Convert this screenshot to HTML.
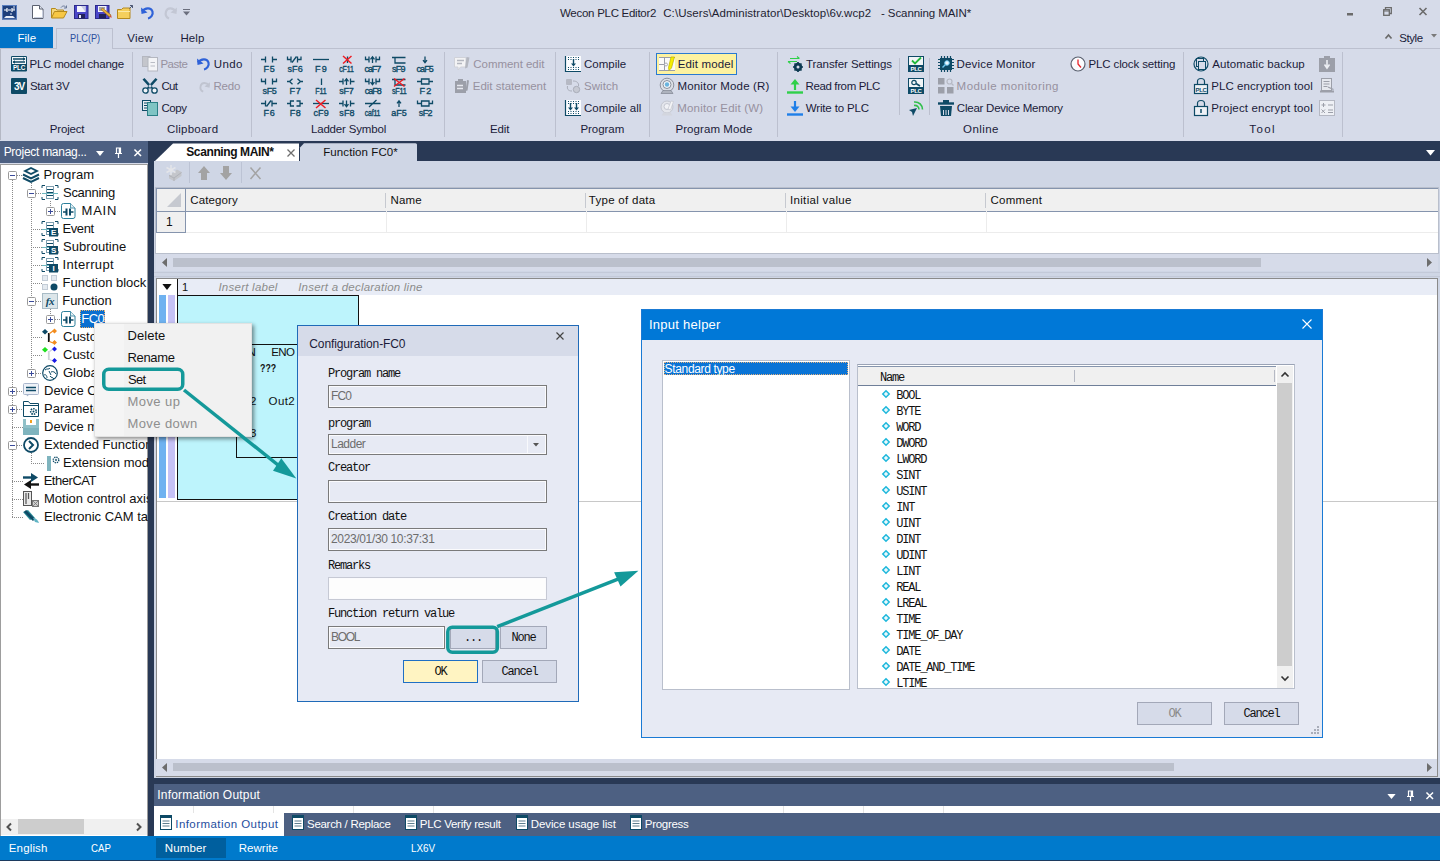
<!DOCTYPE html>
<html><head><meta charset="utf-8"><title>Wecon PLC Editor2</title>
<style>
*{box-sizing:border-box;margin:0;padding:0}
html,body{width:1440px;height:861px;overflow:hidden}
body{position:relative;background:#d6dbe9;font-family:"Liberation Sans",sans-serif;font-size:11.5px;letter-spacing:-0.25px;color:#1b1b3a}
.a{position:absolute}
svg{position:absolute;overflow:visible}
.t{position:absolute;white-space:nowrap;line-height:16px;height:16px}
.g{color:#96919f}
.sep{position:absolute;width:1px;background:#bcc0cf;top:52px;height:85px}
.gl{position:absolute;top:121px;height:16px;line-height:16px;text-align:center;white-space:nowrap;transform:translateX(-50%)}
.mono{font-family:"Liberation Mono",monospace;font-size:12px;letter-spacing:-1.2px;color:#111}
.inp{position:absolute;border:1px solid #7a7a7a;height:23px;background:#e7eaf4;color:#6d6d6d;font-size:12px;line-height:20px;padding-left:3px;outline:1px solid #fff}
.btn{position:absolute;border:1px solid #a9aebb;background:#d6dbe9;height:23px;text-align:center;line-height:21px}
.tr{position:absolute;white-space:nowrap;font-size:13px;letter-spacing:0;line-height:18px;height:18px;color:#111}
</style></head><body>
<!-- title bar -->
<svg style="left:2px;top:5px" width="16" height="15" viewBox="0 0 16 15"><rect width="15" height="14.5" fill="#1f3f7a"/><rect x="0.5" y="0.5" width="14" height="13.5" fill="none" stroke="#5a7fc0" stroke-width="1"/><path d="M2 5h3M10 5h3M5 3v4M10 3v4M6 5h3" stroke="#fff" stroke-width="1.2" fill="none"/><path d="M12 1v4M9 8v2" stroke="#dfe6f5" stroke-width="1"/><path d="M2 13l2-2h7l2 2z" fill="#e8edf8"/></svg>
<svg style="left:32px;top:5px" width="12" height="14" viewBox="0 0 12 14"><path d="M.5.5h7l3.5 3.5v9.500h-10.500z" fill="#fff" stroke="#5b6170"/><path d="M7.500.5v3.500h3.500" fill="#dfe3ee" stroke="#5b6170"/><path d="M2 12.500h8.500v-7" fill="none" stroke="#c9cfdf"/></svg>
<svg style="left:51px;top:5px" width="17" height="14" viewBox="0 0 17 14"><path d="M.5 13V3.500h4l1.500 1.500h6.500V7" fill="#f5d77a" stroke="#b58a1e"/><path d="M.5 13l3-6.500h12.500l-3.500 6.500z" fill="#f7c744" stroke="#b58a1e"/><path d="M10 2.500c1.500-2 4-2 5 0" fill="none" stroke="#6b7a99"/><path d="M15.500.5v2.500h-2.500" fill="none" stroke="#6b7a99"/></svg>
<svg style="left:74px;top:5px" width="15" height="14" viewBox="0 0 15 14"><rect x=".5" y=".5" width="13.500" height="13" fill="#4a46c8" stroke="#2b2a8a"/><rect x="3" y="1" width="8.500" height="6" fill="#f4f5fb"/><path d="M7 1l4.500 0v6z" fill="#c7cbe6"/><rect x="4" y="9" width="7" height="4.500" fill="#22225a"/><rect x="5" y="10" width="2" height="3" fill="#e6e8f5"/></svg>
<svg style="left:95px;top:5px" width="17" height="14" viewBox="0 0 17 14"><rect x=".5" y=".5" width="13.500" height="13" fill="#4a46c8" stroke="#2b2a8a"/><rect x="3" y="1" width="8.500" height="6" fill="#f4f5fb"/><path d="M4 3h6M4 5h4" stroke="#555"/><rect x="4" y="9" width="7" height="4.500" fill="#22225a"/><path d="M6 4.500l8.500 7.500 1.500-2-8.500-7z" fill="#e9b13a" stroke="#8a5a12" stroke-width=".6"/><path d="M14.500 12l1.500-2 .8 2.800z" fill="#d24a3a"/></svg>
<svg style="left:117px;top:5px" width="17" height="14" viewBox="0 0 17 14"><path d="M.5 13.500V4.500h4l1.500-1.500h7V13.500z" fill="#f5cf5c" stroke="#b58a1e"/><path d="M1 6.500h12" stroke="#fbe9a6"/><path d="M12.500 3.500l3-3M13 .5h2.500v2.500" fill="none" stroke="#4d5874"/></svg>
<svg style="left:141px;top:6px" width="13" height="13" viewBox="0 0 13 13"><path d="M1 5.500C4 1.500 10 1 11.500 5.500 12.500 9 9.500 12 7 12.500" fill="none" stroke="#2f62d8" stroke-width="2.200"/><path d="M0 1.500l.5 6.500 6-1.500z" fill="#2f62d8"/></svg>
<svg style="left:164px;top:6px" width="13" height="13" viewBox="0 0 13 13"><path d="M12 5.500C9 1.500 3.500 1 2 5.500 1 9 2.500 11.500 5 12.500" fill="none" stroke="#c3c7d4" stroke-width="2.200"/><path d="M13 1.500l-.5 6.500-6-1.500z" fill="#c3c7d4"/></svg>
<svg style="left:183px;top:9px" width="7" height="7" viewBox="0 0 7 7"><path d="M0 .5h7" stroke="#6a6e7d"/><path d="M0 2.500h7l-3.500 4z" fill="#6a6e7d"/></svg>
<div class="t" style="left:560px;top:5px;color:#1e1e32;letter-spacing:-0.274px;left:560.0px" id="ttl1">Wecon PLC Editor2</div>
<div class="t" style="left:663px;top:5px;color:#1e1e32;letter-spacing:0.063px;left:663.25px" id="ttl2">C:\Users\Administrator\Desktop\6v.wcp2</div>
<div class="t" style="left:881px;top:5px;color:#1e1e32;letter-spacing:-0.084px;left:881.0px" id="ttl3">- Scanning MAIN*</div>
<svg style="left:1347px;top:12.500px" width="6" height="3"><rect width="6" height="2.500" fill="#6b6b6b"/></svg>
<svg style="left:1383px;top:7px" width="9" height="9" viewBox="0 0 9 9"><path d="M2.500 2.500V.7h5.800v5.800h-2" fill="none" stroke="#6b6b6b" stroke-width="1.300"/><rect x=".7" y="2.700" width="5.600" height="5.600" fill="none" stroke="#6b6b6b" stroke-width="1.300"/><path d="M.5 4h6" stroke="#6b6b6b" stroke-width="1"/></svg>
<svg style="left:1418.500px;top:8px" width="8" height="7" viewBox="0 0 8 7"><path d="M.5 0l7 7M7.500 0l-7 7" stroke="#6b6b6b" stroke-width="1.600"/></svg>
<!-- ribbon tabs -->
<div class="a" style="left:0;top:27px;width:53px;height:21px;background:#0173c7"></div>
<div class="t" style="left:16px;top:30px;color:#fff;letter-spacing:0.038px;left:17.45px" id="tfile">File</div>
<div class="a" style="left:0;top:48px;width:1440px;height:1px;background:#bcc0cf"></div>
<div class="a" style="left:56px;top:28px;width:57px;height:21px;background:#d6dbe9;border:1px solid #bcc0cf;border-bottom:none"></div>
<div class="t" style="left:70px;top:30px;color:#2b4f9e;transform:scaleX(.8);transform-origin:0 0;letter-spacing:0px;left:69.5px" id="tplc">PLC(P)</div>
<div class="t" style="left:128px;top:30px;letter-spacing:0.279px;left:127.25px" id="tview">View</div>
<div class="t" style="left:181px;top:30px;letter-spacing:0.098px;left:180.45px" id="thelp">Help</div>
<svg style="left:1385px;top:34px" width="7" height="5" viewBox="0 0 7 5"><path d="M.5 4.500l3-3.500 3 3.500" fill="none" stroke="#6b6b6b" stroke-width="1.700"/></svg>
<div class="t" style="left:1399px;top:30px;letter-spacing:-0.418px;left:1399.15px" id="tstyle">Style</div>
<svg style="left:1431px;top:34px" width="6" height="4" viewBox="0 0 6 4"><path d="M0 0h6l-3 3.500z" fill="#7a7a7a"/></svg>
<div class="a" style="left:0;top:49px;width:1px;height:91px;background:#b4b8c4"></div>
<!-- group separators -->
<div class="sep" style="left:132px"></div><div class="sep" style="left:251px"></div><div class="sep" style="left:444px"></div><div class="sep" style="left:555px"></div><div class="sep" style="left:649px"></div><div class="sep" style="left:777px"></div><div class="sep" style="left:1183px"></div><div class="sep" style="left:1342px"></div>
<div class="sep" style="left:899px;top:58px;height:57px"></div><div class="sep" style="left:929px;top:58px;height:57px"></div>
<!-- group labels -->
<div class="gl" style="left:67px;letter-spacing:-0.182px;left:67.11px" id="gl1">Project</div>
<div class="gl" style="left:192px;letter-spacing:0.241px;left:192.64px" id="gl2">Clipboard</div>
<div class="gl" style="left:348px;letter-spacing:-0.171px;left:348.52px" id="gl3">Ladder Symbol</div>
<div class="gl" style="left:500px;letter-spacing:-0.124px;left:499.66px" id="gl4">Edit</div>
<div class="gl" style="left:602px;letter-spacing:-0.044px;left:602.34px" id="gl5">Program</div>
<div class="gl" style="left:713px;letter-spacing:0.076px;left:713.96px" id="gl6">Program Mode</div>
<div class="gl" style="left:980px;letter-spacing:0.421px;left:980.96px" id="gl7">Online</div>
<div class="gl" style="left:1263px;letter-spacing:1.386px;left:1262.64px" id="gl8">Tool</div>
<!-- Project -->
<svg style="left:11px;top:56px" width="16" height="16" viewBox="0 0 16 16"><rect width="16" height="15.500" rx="1.200" fill="#0e4a66"/><rect x="1" y="1" width="14" height="7" fill="#f4f7fa"/><path d="M2 3h12M2 6h12" stroke="#0e4a66" stroke-width="1.300"/><path d="M12 1.300l2.500 1.700-2.500 1.700zM4 4.300l-2.500 1.700 2.500 1.700z" fill="#0e4a66"/><text x="8" y="14.300" font-size="6.500" font-weight="bold" fill="#fff" text-anchor="middle" font-family="Liberation Sans,sans-serif" textLength="12" lengthAdjust="spacingAndGlyphs">PLC</text></svg>
<div class="t" style="left:30px;top:56px;letter-spacing:-0.205px;left:29.45px" id="r1">PLC model change</div>
<svg style="left:11px;top:78px" width="16" height="16" viewBox="0 0 16 16"><rect width="16" height="16" rx="1" fill="#0e4a66"/><text x="8" y="12" font-size="10" font-weight="bold" fill="#fff" text-anchor="middle" font-family="Liberation Sans,sans-serif" letter-spacing="-1">3V</text></svg>
<div class="t" style="left:30px;top:78px;letter-spacing:-0.261px;left:29.95px" id="r2">Start 3V</div>
<!-- Clipboard -->
<svg style="left:142px;top:56px" width="16" height="16" viewBox="0 0 16 16"><rect x=".5" y=".5" width="7.500" height="10" fill="#c4c6cc" stroke="#b4b7c0"/><rect x="6" y="1.500" width="9.500" height="13.500" fill="#f3f4f7" stroke="#b4b7c0"/><path d="M8.500 6.500h4.500M8.500 10h4.500" stroke="#b9bcc5" stroke-width="1.200"/></svg>
<div class="t g" style="left:161px;top:56px;letter-spacing:-0.492px;left:160.45px" id="r3">Paste</div>
<svg style="left:197px;top:57px" width="13" height="13" viewBox="0 0 13 13"><path d="M1 5.500C4 1.500 10 1 11.500 5.500 12.500 9 9.500 12 7 12.500" fill="none" stroke="#2f62d8" stroke-width="2.200"/><path d="M0 1.500l.5 6.500 6-1.500z" fill="#2f62d8"/></svg>
<div class="t" style="left:214px;top:56px;letter-spacing:0.385px;left:213.75px" id="r4">Undo</div>
<svg style="left:142px;top:78px" width="16" height="16" viewBox="0 0 16 16"><path d="M.5 1.500L2.500 0l8.500 9.500-2 1.500zM15.500 1.500L13.500 0 5 9.500l2 1.500z" fill="#0e4a66"/><circle cx="3.500" cy="12.500" r="2.700" fill="#f2f5f9" stroke="#0e4a66" stroke-width="1.300"/><circle cx="12.500" cy="12.500" r="2.700" fill="#f2f5f9" stroke="#0e4a66" stroke-width="1.300"/></svg>
<div class="t" style="left:161px;top:78px;letter-spacing:-0.725px;left:161.5px" id="r5">Cut</div>
<svg style="left:199px;top:81px" width="11" height="11" viewBox="0 0 13 13"><path d="M12 5.500C9 1.500 3.500 1 2 5.500 1 9 2.500 11.500 5 12.500" fill="none" stroke="#c0c4d0" stroke-width="2.200"/><path d="M13 1.500l-.5 6.500-6-1.500z" fill="#c0c4d0"/></svg>
<div class="t g" style="left:214px;top:78px;letter-spacing:-0.199px;left:213.5px" id="r6">Redo</div>
<svg style="left:142px;top:100px" width="16" height="16" viewBox="0 0 16 16"><rect x=".5" y=".5" width="8" height="10" fill="#e9eef2" stroke="#0e4a66"/><path d="M2 3h4M2 5.500h4M2 8h3" stroke="#0e4a66"/><rect x="5.500" y="2.500" width="10" height="13" fill="#7fc4c4" stroke="#2b7f86"/></svg>
<div class="t" style="left:161px;top:100px;letter-spacing:-0.449px;left:161.5px" id="r7">Copy</div>
<!-- Ladder symbols -->
<svg style="left:256px;top:54px" width="186" height="66" viewBox="0 0 186 66" font-family="Liberation Sans,sans-serif" font-size="9" fill="#0e4a66">
<g stroke="#0e4a66" stroke-width="1.300" fill="none">
<path transform="translate(5 2.5)" d="M0 3H4.500M4.500 0V6M11.500 0V6M11.500 3H16"/>
<path transform="translate(31 2.5)" d="M.5 0V3H4M4 0V6M5 6L9.500 0M10.500 0V6M10.500 3H14V0"/>
<path transform="translate(57 2.5)" d="M0 3H16"/>
<path transform="translate(83 2.5)" d="M8.500 0V6.500"/>
<path transform="translate(109 2.5)" d="M.5 0V3H4M4 0V6M11 0V6M11 3H14.500V0M7.5 6.500V.5M5.5 2.800L7.5 .3L9.5 2.800"/>
<path transform="translate(135 2.5)" d="M1 1H14.500M4 1V6.500H14.500"/>
<path transform="translate(161 2.5)" d="M8 0V6M6 3.700L8 6.200L10 3.700"/>
<path transform="translate(5 24.5)" d="M.5 0V3H4.500M4.500 0V6M11.500 0V6M11.500 3H15.500V0"/>
<path transform="translate(31 24.5)" d="M0 3H2.500M5.500 .2L2.500 3L5.500 5.800M10.500 .2L13.500 3L10.500 5.800M13.500 3H16"/>
<path transform="translate(57 24.5)" d="M8.500 0V6.500"/>
<path transform="translate(83 24.5)" d="M0 3H4M4 0V6M11.500 0V6M11.500 3H15.500M7.5 6.500V.5M5.5 2.800L7.5 .3L9.5 2.800"/>
<path transform="translate(109 24.5)" d="M.5 0V3H4M4 0V6M11 0V6M11 3H14.500V0M7.5 0V6M5.5 3.700L7.5 6.200L9.5 3.700"/>
<path transform="translate(135 24.5)" d="M1 1H14.500M4 1V6.500H14.500"/>
<path transform="translate(161 24.5)" d="M0 3H4.500M4.500 .5H12V5.500H4.500ZM12 3H16"/>
<path transform="translate(5 46.5)" d="M0 3H4.500M4.500 0V6M5.500 6L10 0M11 0V6M11 3H16"/>
<path transform="translate(31 46.5)" d="M0 3H3.500M7 .5H3.500V5.500H7M9.500 .5H13V5.500H9.500M13 3H16"/>
<path transform="translate(57 46.5)" d="M0 3H16"/>
<path transform="translate(83 46.5)" d="M0 3H4M4 0V6M11.500 0V6M11.500 3H15.500M7.5 0V6M5.5 3.700L7.5 6.200L9.5 3.700"/>
<path transform="translate(109 46.5)" d="M0 3H15.500M4 6.500L11.500 -.5"/>
<path transform="translate(135 46.5)" d="M8 6.500V.5M6 2.800L8 .3L10 2.800"/>
<path transform="translate(161 46.5)" d="M.5 0V3H4.500M4.500 .5H12V5.500H4.500ZM12 3H15.500V0"/>
</g><g stroke="#ee1c24" stroke-width="1.500" fill="none">
<path transform="translate(83 2.5)" d="M4 -.5L12.500 7M12.500 -.5L4 7"/>
<path transform="translate(135 24.5)" d="M3 0L13.500 8M13.500 0L3 8"/>
<path transform="translate(57 46.5)" d="M3 -.5L12.500 7.500M12.500 -.5L3 7.500"/>
</g><g stroke="#0e4a66" stroke-width=".35">
<text x="7.6" y="18" textLength="10.9" lengthAdjust="spacing">F5</text>
<text x="31.4" y="18" textLength="15.2" lengthAdjust="spacing">sF6</text>
<text x="59.0" y="18" textLength="11.4" lengthAdjust="spacing">F9</text>
<text x="83.3" y="18" textLength="14.3" lengthAdjust="spacingAndGlyphs">cF11</text>
<text x="108.6" y="18" textLength="16.4" lengthAdjust="spacing">caF7</text>
<text x="135.9" y="18" textLength="13.4" lengthAdjust="spacing">sF9</text>
<text x="160.4" y="18" textLength="17.2" lengthAdjust="spacing">caF5</text>
<text x="6.5" y="40" textLength="14.1" lengthAdjust="spacing">sF5</text>
<text x="33.4" y="40" textLength="11.0" lengthAdjust="spacing">F7</text>
<text x="59.3" y="40" textLength="11.1" lengthAdjust="spacingAndGlyphs">F11</text>
<text x="83.3" y="40" textLength="14.3" lengthAdjust="spacing">sF7</text>
<text x="108.7" y="40" textLength="16.7" lengthAdjust="spacing">caF8</text>
<text x="135.9" y="40" textLength="14.7" lengthAdjust="spacingAndGlyphs">sF11</text>
<text x="163.5" y="40" textLength="11.4" lengthAdjust="spacing">F2</text>
<text x="7.6" y="62" textLength="10.9" lengthAdjust="spacing">F6</text>
<text x="33.7" y="62" textLength="10.7" lengthAdjust="spacing">F8</text>
<text x="57.4" y="62" textLength="15.0" lengthAdjust="spacing">cF9</text>
<text x="83.3" y="62" textLength="15.0" lengthAdjust="spacing">sF8</text>
<text x="108.7" y="62" textLength="15.6" lengthAdjust="spacingAndGlyphs">caf11</text>
<text x="135.2" y="62" textLength="15.4" lengthAdjust="spacing">aF5</text>
<text x="162.8" y="62" textLength="13.5" lengthAdjust="spacing">sF2</text>
</g></svg>
<!-- Edit -->
<svg style="left:454px;top:56px" width="16" height="16" viewBox="0 0 16 16"><path d="M.5 1.500h11.500v9.500h-5.500l-2.500 3v-3h-3.500z" fill="#f3f3f5" stroke="#d0d2d9"/><path d="M3 4.500h7M3 7.500h5" stroke="#b4b7c0" stroke-width="1.500"/><path d="M12.500 1l3 .5-2 10-2.500 1z" fill="#b4b7c0"/></svg>
<div class="t g" style="left:473px;top:56px;letter-spacing:-0.035px;left:473.25px" id="r8">Comment edit</div>
<svg style="left:454px;top:78px" width="16" height="16" viewBox="0 0 16 16"><rect x="1" y="3" width="11" height="12" fill="#9c9fa9"/><rect x="4" y="1" width="5" height="3" fill="#9c9fa9"/><path d="M3 7.500h6M3 10.500h6" stroke="#e6e8ef" stroke-width="1.400"/><path d="M13 2l2 .5-1.500 10-2 .5z" fill="#9c9fa9"/></svg>
<div class="t g" style="left:473px;top:78px;letter-spacing:-0.005px;left:472.75px" id="r9">Edit statement</div>
<!-- Program -->
<svg style="left:565px;top:56px" width="16" height="16" viewBox="0 0 16 16"><rect x="1" y="0" width="15" height="15.500" fill="#fbfcfe"/><path d="M.5 0v15.500h15.500" fill="none" stroke="#0e4a66" stroke-width="1.200"/><path d="M3 1.500h11M3 3.500h11M3 11.500h11M3 13.500h11" stroke="#0e4a66" stroke-width="1" stroke-dasharray="1 1.500"/><path d="M8.500 3v6" stroke="#0e4a66" stroke-width="1.400"/><path d="M6 7.500h5l-2.500 3z" fill="#0e4a66"/></svg>
<div class="t" style="left:584px;top:56px;letter-spacing:-0.006px;left:584.0px" id="r10">Compile</div>
<svg style="left:565px;top:78px" width="16" height="16" viewBox="0 0 16 16"><rect x="1" y="1" width="6" height="6" rx="1" fill="#b6b9c4"/><circle cx="11.500" cy="11.500" r="3.200" fill="#c6c9d3" stroke="#a9adb9"/><path d="M8 3c4 0 6 2 5.500 5M7 13c-4 0-5-2-4.500-5" fill="none" stroke="#a9adb9"/></svg>
<div class="t g" style="left:584px;top:78px;letter-spacing:0.055px;left:584.0px" id="r11">Switch</div>
<svg style="left:565px;top:100px" width="16" height="16" viewBox="0 0 16 16"><rect x="1" y="0" width="15" height="15.500" fill="#fbfcfe"/><path d="M.5 0v15.500h15.500" fill="none" stroke="#0e4a66" stroke-width="1.200"/><path d="M3 1.500h11M3 3.500h11M3 11.500h11M3 13.500h11" stroke="#0e4a66" stroke-width="1" stroke-dasharray="1 1.500"/><path d="M5.500 3v6M11.500 3v6" stroke="#0e4a66" stroke-width="1.400"/><path d="M3 7.500h5l-2.500 3zM9 7.500h5l-2.500 3z" fill="#0e4a66"/></svg>
<div class="t" style="left:584px;top:100px;letter-spacing:0.042px;left:584.0px" id="r12">Compile all</div>
<!-- Program Mode -->
<div class="a" style="left:656px;top:53px;width:81px;height:22px;background:#fdf2a0;border:1px solid #2a7ad1"></div>
<svg style="left:659px;top:56px" width="16" height="16" viewBox="0 0 16 16"><rect x="0" y="1" width="16" height="14" fill="#fafafa"/><path d="M0 1.500h16M0 8.500h8M0 14.500h16M5.500 1v14" stroke="#9a9ea8" fill="none"/><circle cx="7" cy="8.500" r="1.500" fill="#fafafa" stroke="#9a9ea8" stroke-width=".8"/><path d="M9.500 11.500l2.500-10.500h3.500l-3 11-2.500 2.500z" fill="#f5ee00" stroke="#bdb000" stroke-width=".7"/></svg>
<div class="t" style="left:678px;top:56px;letter-spacing:0.15px;left:677.7px" id="r13">Edit model</div>
<svg style="left:659px;top:78px" width="16" height="16" viewBox="0 0 16 16"><circle cx="8" cy="7" r="6.800" fill="#dcdfe6" stroke="#8d929e"/><circle cx="8" cy="6.500" r="4" fill="#f4f7fb" stroke="#8a909c"/><circle cx="8" cy="6.500" r="2.200" fill="#6ab4de"/><path d="M2 15.500h12l-2-3h-8z" fill="#aeb3be" stroke="#7e8491" stroke-width=".7"/></svg>
<div class="t" style="left:678px;top:78px;letter-spacing:0.157px;left:677.5px" id="r14">Monitor Mode (R)</div>
<svg style="left:659px;top:100px" width="16" height="16" viewBox="0 0 16 16"><circle cx="8" cy="7" r="6" fill="#e4e6ec" stroke="#c3c6d0"/><circle cx="8" cy="6.500" r="3" fill="#f1f2f6" stroke="#c3c6d0"/><path d="M2.500 15.500h11l-2-3h-7z" fill="#d3d6de"/><path d="M9 9l3-8 2.500.5-3 8.500z" fill="#f4f4f6" stroke="#c3c6d0" stroke-width=".7"/></svg>
<div class="t g" style="left:678px;top:100px;letter-spacing:0.185px;left:677.25px" id="r15">Monitor Edit (W)</div>
<!-- Online -->
<svg style="left:787px;top:56px" width="16" height="16" viewBox="0 0 16 16"><path d="M3 2.500h9M1 5.500h9" stroke="#2fd04a" stroke-width="1.100"/><path d="M10 .5l2.500 2M3.500 7.500l-2.500-2" fill="none" stroke="#2fd04a" stroke-width="1.100"/><circle cx="11" cy="11" r="3" fill="none" stroke="#0e3a52" stroke-width="2.400"/><path d="M11 6v10M6 11h10M7.500 7.500l7 7M14.500 7.500l-7 7" stroke="#0e3a52" stroke-width="1.700"/><circle cx="11" cy="11" r="1.500" fill="#d6dbe9"/></svg>
<div class="t" style="left:806px;top:56px;letter-spacing:-0.07px;left:806.0px" id="r16">Transfer Settings</div>
<svg style="left:787px;top:78px" width="16" height="16" viewBox="0 0 16 16"><path d="M8 12V5" stroke="#2fd04a" stroke-width="2.200"/><path d="M3.500 6.500L8 1l4.500 5.500z" fill="#2fd04a"/><path d="M0 14.500h16" stroke="#2fd04a" stroke-width="2.400"/></svg>
<div class="t" style="left:806px;top:78px;letter-spacing:-0.37px;left:805.5px" id="r17">Read from PLC</div>
<svg style="left:787px;top:100px" width="16" height="16" viewBox="0 0 16 16"><path d="M8 1v7" stroke="#1f7fe8" stroke-width="2.200"/><path d="M3.500 6.500L8 12l4.500-5.500z" fill="#1f7fe8"/><path d="M0 14.500h16" stroke="#1f7fe8" stroke-width="2.400"/></svg>
<div class="t" style="left:806px;top:100px;letter-spacing:-0.152px;left:805.75px" id="r18">Write to PLC</div>
<svg style="left:908px;top:56px" width="16" height="16" viewBox="0 0 16 16"><rect width="16" height="16" fill="#0e4a66"/><rect x="1" y="1" width="14" height="8" fill="#f1f5f7"/><path d="M4 4.500l3 3 6-6" fill="none" stroke="#22b83c" stroke-width="1.800"/><text x="8" y="15" font-size="6" font-weight="bold" fill="#fff" text-anchor="middle" font-family="Liberation Sans,sans-serif">PLC</text></svg>
<svg style="left:908px;top:78px" width="16" height="16" viewBox="0 0 16 16"><rect width="16" height="16" fill="#0e4a66"/><rect x="1" y="1" width="14" height="8" fill="#f1f5f7"/><circle cx="6" cy="4.500" r="2.200" fill="none" stroke="#0e4a66" stroke-width="1.200"/><path d="M8 5.500l4 2.500" stroke="#0e4a66" stroke-width="1.500"/><text x="8" y="15" font-size="6" font-weight="bold" fill="#fff" text-anchor="middle" font-family="Liberation Sans,sans-serif">PLC</text></svg>
<svg style="left:908px;top:100px" width="16" height="16" viewBox="0 0 16 16"><path d="M1 10l8-2-4 8-1-4z" fill="#0e4a66"/><path d="M6 5.500c3-.5 5 1.500 5 4M6 2c5-.5 8.500 3 8.500 7.500" fill="none" stroke="#2fbf4a" stroke-width="1.600"/></svg>
<svg style="left:938px;top:56px" width="16" height="16" viewBox="0 0 16 16"><path d="M0 3.500h16M0 6.500h16M0 9.500h16M0 12.500h16M3.500 0v16M6.500 0v16M9.500 0v16M12.500 0v16" stroke="#0e4a66" stroke-width="1.200"/><rect x="2" y="2" width="12" height="12" fill="#0e4a66"/><circle cx="9" cy="7" r="2.300" fill="#eaf6ff" stroke="#6ec6f0"/><path d="M7.500 8.500l-3 3" stroke="#6ec6f0" stroke-width="1.500"/></svg>
<div class="t" style="left:957px;top:56px;letter-spacing:0.161px;left:956.6px" id="r19">Device Monitor</div>
<svg style="left:938px;top:78px" width="16" height="16" viewBox="0 0 16 16"><rect x="0" y="0" width="6.500" height="6.500" fill="#9c9fa9"/><rect x="0" y="9" width="6.500" height="6.500" fill="#9c9fa9"/><rect x="9" y="9" width="6.500" height="6.500" fill="#9c9fa9"/><circle cx="11.500" cy="3.500" r="2.500" fill="none" stroke="#b5b8c3" stroke-width="1.200"/><path d="M13.500 5.500l2 2" stroke="#b5b8c3" stroke-width="1.300"/></svg>
<div class="t g" style="left:957px;top:78px;letter-spacing:0.453px;left:956.6px" id="r20">Module monitoring</div>
<svg style="left:938px;top:100px" width="16" height="16" viewBox="0 0 16 16"><path d="M0 3.500h16" stroke="#0e4a66" stroke-width="2.400"/><rect x="5" y="0" width="6" height="3" fill="#0e4a66"/><path d="M2 6h12l-1 10h-10z" fill="#0e4a66"/><path d="M5.500 10v5M8 10v5M10.500 10v5" stroke="#d6dbe9" stroke-width="1"/></svg>
<div class="t" style="left:957px;top:100px;letter-spacing:-0.241px;left:956.85px" id="r21">Clear Device Memory</div>
<svg style="left:1070px;top:56px" width="16" height="16" viewBox="0 0 16 16"><circle cx="8" cy="8" r="7" fill="#fbfcfe" stroke="#5b6170" stroke-width="1.200"/><path d="M8 3.500v4.500l3 3.500" fill="none" stroke="#e8242a" stroke-width="1.300"/></svg>
<div class="t" style="left:1089px;top:56px;letter-spacing:-0.122px;left:1088.45px" id="r22">PLC clock setting</div>
<!-- Tool -->
<svg style="left:1193px;top:56px" width="16" height="16" viewBox="0 0 16 16"><circle cx="8" cy="8" r="7" fill="none" stroke="#0e4a66" stroke-width="1.200"/><rect x="3.500" y="2.500" width="7" height="8" fill="#d6dbe9" stroke="#0e4a66"/><rect x="5.500" y="5.500" width="7" height="8" fill="#d6dbe9" stroke="#0e4a66"/></svg>
<div class="t" style="left:1212px;top:56px;letter-spacing:0.07px;left:1212.3px" id="r23">Automatic backup</div>
<svg style="left:1193px;top:78px" width="16" height="16" viewBox="0 0 16 16"><path d="M4.500 6V3.500a3.500 3 0 0 1 7 0V6" fill="none" stroke="#0e4a66" stroke-width="1.200"/><rect x="1.500" y="6.500" width="13" height="9" fill="#eef1f6" stroke="#0e4a66" stroke-width="1.200"/><text x="8" y="14" font-size="6" font-weight="bold" fill="#0e4a66" text-anchor="middle" font-family="Liberation Sans,sans-serif">PLC</text></svg>
<div class="t" style="left:1212px;top:78px;letter-spacing:0.057px;left:1211.3px" id="r24">PLC encryption tool</div>
<svg style="left:1193px;top:100px" width="16" height="16" viewBox="0 0 16 16"><path d="M4.500 6V3.500a3.500 3 0 0 1 7 0V6" fill="none" stroke="#0e4a66" stroke-width="1.200"/><rect x="1.500" y="6.500" width="13" height="9" fill="#eef1f6" stroke="#0e4a66" stroke-width="1.200"/><path d="M8 9v4" stroke="#0e4a66" stroke-width="1.500"/></svg>
<div class="t" style="left:1212px;top:100px;letter-spacing:0.156px;left:1211.3px" id="r25">Project encrypt tool</div>
<svg style="left:1319px;top:56px" width="16" height="16" viewBox="0 0 16 16"><rect x="0" y="2" width="16" height="14" fill="#9c9fa9"/><rect x="5" y="0" width="6" height="3" fill="#9c9fa9"/><path d="M8 4v7M5.500 8.500l2.500 3.500 2.500-3.500" fill="none" stroke="#eceef3" stroke-width="1.600"/></svg>
<svg style="left:1319px;top:78px" width="16" height="16" viewBox="0 0 16 16"><rect x="2.500" y=".5" width="10" height="12" fill="#e6e8ee" stroke="#9c9fa9"/><path d="M4.500 3.500h6M4.500 6h6M4.500 8.500h4" stroke="#9c9fa9"/><path d="M1 13.500h14" stroke="#9c9fa9" stroke-width="2"/><path d="M9 9l5.500 2.500" stroke="#9c9fa9" stroke-width="1.300"/></svg>
<svg style="left:1319px;top:100px" width="16" height="16" viewBox="0 0 16 16"><rect x=".5" y=".5" width="15" height="15" fill="#eef0f5" stroke="#b5b8c3"/><path d="M2.500 5h4M4.500 3v4M2.500 9.500l3.500 3.500M6 9.500l-3.500 3.500M9 5h5M9 10h5M9 12.500h5" stroke="#9c9fa9"/></svg>
<!-- left panel -->
<div class="a" style="left:0;top:141px;width:1440px;height:697px;background:#293955"></div>
<div class="a" style="left:0;top:141px;width:148px;height:21.500px;background:#4d6082"></div><div class="a" style="left:0;top:162.500px;width:148px;height:2px;background:#d6dbe9"></div>
<div class="t" style="left:4px;top:144px;color:#fff;font-size:12px;letter-spacing:-0.1px;letter-spacing:-0.274px;left:3.65px" id="pm">Project manag...</div>
<svg style="left:95.500px;top:150.500px" width="8" height="5.500" viewBox="0 0 9 6"><path d="M0 0h9l-4.500 5.500z" fill="#fff"/></svg>
<svg style="left:115px;top:147.700px" width="7" height="10" viewBox="0 0 7 10"><path d="M1.500 0h4v5.500h-4zM0 5.500h7M3.500 5.500v4.500" fill="none" stroke="#fff" stroke-width="1.200"/><path d="M4.500 0v5.500" stroke="#fff" stroke-width="1.600"/></svg>
<svg style="left:134px;top:149px" width="7.500" height="7.500" viewBox="0 0 8 8"><path d="M.5.5l7 7M7.500.5l-7 7" stroke="#fff" stroke-width="1.600"/></svg>
<div class="a" style="left:0;top:164.300px;width:148px;height:672px;background:#fff;border:1px solid #9d9d9d;border-bottom:none"></div>
<svg style="left:0;top:164px" width="148" height="370" viewBox="0 164 148 370"><g stroke="#8a8a8a" stroke-width="1" stroke-dasharray="1 1" fill="none">
<path d="M12.500 180V517M17 175.500h6M31.500 183V373M36 193.500h6M50.500 201V211M55 211.500h7M31 229.500h11M31 247.500h11M31 265.500h11M31 283.500h11M36 301.500h6M50.500 309V319M55 319.500h7M31 337.500h11M31 355.500h11M36 373.500h6M17 391.500h6M17 409.500h6M12 427.500h11M17 445.500h6M31.500 453V463M31 463.500h14M12 481.500h11M12 499.500h11M12 517.500h11"/>
</g></svg>
<svg style="left:8px;top:171px" width="9" height="9" viewBox="0 0 9 9"><rect x=".5" y=".5" width="8" height="8" rx="1" fill="#fff" stroke="#9a9a9a"/><path d="M2 4.500h5" stroke="#3a4a9a" stroke-width="1"/></svg>
<svg style="left:23px;top:167px" width="16" height="16" viewBox="0 0 16 16"><path d="M8 0l8 4-8 4-8-4z" fill="#0e4a66"/><path d="M8 2l4 2-4 2-4-2z" fill="#fff"/><path d="M0 7.500l8 4 8-4M0 11l8 4 8-4" fill="none" stroke="#0e4a66" stroke-width="2"/></svg>
<div class="tr" style="left:44px;top:166px;letter-spacing:0.1px;left:43.6px" id="tr0">Program</div>
<svg style="left:27px;top:189px" width="9" height="9" viewBox="0 0 9 9"><rect x=".5" y=".5" width="8" height="8" rx="1" fill="#fff" stroke="#9a9a9a"/><path d="M2 4.500h5" stroke="#3a4a9a" stroke-width="1"/></svg>
<svg style="left:42px;top:185px" width="16" height="16" viewBox="0 0 16 16"><path d="M0 3V.5h3M13 .5h3V3M0 12v2.500h3M13 14.500h3V12" fill="none" stroke="#0e4a66" stroke-width="1"/><rect x="4.500" y="1.500" width="7" height="12" fill="#fff" stroke="#7f9fb0"/><path d="M5 4.500h6M5 7.500h6M5 10.500h6" stroke="#0e4a66"/><path d="M0 8.500h16" stroke="#6fb8c0"/></svg>
<div class="tr" style="left:63px;top:184px;letter-spacing:-0.283px;left:63.0px" id="tr1">Scanning</div>
<svg style="left:46px;top:207px" width="9" height="9" viewBox="0 0 9 9"><rect x=".5" y=".5" width="8" height="8" rx="1" fill="#fff" stroke="#9a9a9a"/><path d="M2 4.500h5M4.500 2v5" stroke="#3a4a9a" stroke-width="1"/></svg>
<svg style="left:61px;top:203px" width="16" height="16" viewBox="0 0 16 16"><path d="M.5 2.500a2 2 0 0 1 2-2h7l4.500 4.500v8.500a2 2 0 0 1-2 2h-9.500a2 2 0 0 1-2-2z" fill="#fff" stroke="#2b7f9a"/><path d="M9.500.5v4.500h4.500" fill="#e4eef3" stroke="#2b7f9a" stroke-width=".8"/><path d="M2 9h3M9.500 9h3" stroke="#0e4a66" stroke-width="1.400"/><path d="M5.500 5.500v7M9 5.500v7" stroke="#0e4a66" stroke-width="2"/></svg>
<div class="tr" style="left:82px;top:202px;letter-spacing:0.796px;left:81.5px" id="tr2">MAIN</div>
<svg style="left:42px;top:221px" width="16" height="16" viewBox="0 0 16 16"><path d="M0 3V.5h3M13 .5h3V3M0 12v2.500h3M13 14.500h3V12" fill="none" stroke="#0e4a66" stroke-width="1"/><rect x="4.500" y="1.500" width="7" height="12" fill="#fff" stroke="#7f9fb0"/><path d="M5 4.500h6M5 7.500h6M5 10.500h6" stroke="#0e4a66"/><path d="M0 8.500h16" stroke="#6fb8c0"/><rect x="7" y="7" width="9" height="8.500" fill="#0e4a66"/><text x="11.500" y="14.300" font-size="8" font-weight="bold" fill="#fff" text-anchor="middle" font-family="Liberation Sans,sans-serif">E</text></svg>
<div class="tr" style="left:63px;top:220px;letter-spacing:-0.408px;left:62.5px" id="tr3">Event</div>
<svg style="left:42px;top:239px" width="16" height="16" viewBox="0 0 16 16"><path d="M0 3V.5h3M13 .5h3V3M0 12v2.500h3M13 14.500h3V12" fill="none" stroke="#0e4a66" stroke-width="1"/><rect x="4.500" y="1.500" width="7" height="12" fill="#fff" stroke="#7f9fb0"/><path d="M5 4.500h6M5 7.500h6M5 10.500h6" stroke="#0e4a66"/><path d="M0 8.500h16" stroke="#6fb8c0"/><rect x="7" y="7" width="9" height="8.500" fill="#0e4a66"/><text x="11.500" y="14.300" font-size="8" font-weight="bold" fill="#fff" text-anchor="middle" font-family="Liberation Sans,sans-serif">S</text></svg>
<div class="tr" style="left:63px;top:238px;letter-spacing:0.044px;left:63.0px" id="tr4">Subroutine</div>
<svg style="left:42px;top:257px" width="16" height="16" viewBox="0 0 16 16"><path d="M0 3V.5h3M13 .5h3V3M0 12v2.500h3M13 14.500h3V12" fill="none" stroke="#0e4a66" stroke-width="1"/><rect x="4.500" y="1.500" width="7" height="12" fill="#fff" stroke="#7f9fb0"/><path d="M5 4.500h6M5 7.500h6M5 10.500h6" stroke="#0e4a66"/><path d="M0 8.500h16" stroke="#6fb8c0"/><rect x="7" y="7" width="9" height="8.500" fill="#0e4a66"/><text x="11.500" y="14.300" font-size="8" font-weight="bold" fill="#fff" text-anchor="middle" font-family="Liberation Sans,sans-serif">I</text></svg>
<div class="tr" style="left:63px;top:256px;letter-spacing:0.338px;left:62.5px" id="tr5">Interrupt</div>
<svg style="left:42px;top:275px" width="16" height="16" viewBox="0 0 16 16"><rect x=".5" y=".5" width="5" height="5" fill="#e4eaf0" stroke="#c3ccd6"/><rect x="9.500" y=".5" width="5" height="5" fill="#e4eaf0" stroke="#c3ccd6"/><rect x=".5" y="9.500" width="5" height="5" fill="#e4eaf0" stroke="#c3ccd6"/><circle cx="12" cy="12" r="3.500" fill="#0e4a66"/></svg>
<div class="tr" style="left:63px;top:274px;letter-spacing:0.0px;left:62.5px" id="tr6">Function block</div>
<svg style="left:27px;top:297px" width="9" height="9" viewBox="0 0 9 9"><rect x=".5" y=".5" width="8" height="8" rx="1" fill="#fff" stroke="#9a9a9a"/><path d="M2 4.500h5" stroke="#3a4a9a" stroke-width="1"/></svg>
<svg style="left:42px;top:293px" width="16" height="16" viewBox="0 0 16 16"><rect x=".5" y=".5" width="15" height="15" fill="#dce6ea" stroke="#a9bcc6"/><text x="8" y="11.500" font-size="11" font-style="italic" font-weight="bold" fill="#0e4a66" text-anchor="middle" font-family="Liberation Serif,serif">fx</text></svg>
<div class="tr" style="left:63px;top:292px;letter-spacing:-0.062px;left:62.3px" id="tr7">Function</div>
<svg style="left:46px;top:315px" width="9" height="9" viewBox="0 0 9 9"><rect x=".5" y=".5" width="8" height="8" rx="1" fill="#fff" stroke="#9a9a9a"/><path d="M2 4.500h5M4.500 2v5" stroke="#3a4a9a" stroke-width="1"/></svg>
<svg style="left:61px;top:311px" width="16" height="16" viewBox="0 0 16 16"><path d="M.5 2.500a2 2 0 0 1 2-2h7l4.500 4.500v8.500a2 2 0 0 1-2 2h-9.500a2 2 0 0 1-2-2z" fill="#fff" stroke="#2b7f9a"/><path d="M9.500.5v4.500h4.500" fill="#e4eef3" stroke="#2b7f9a" stroke-width=".8"/><path d="M2 9h3M9.500 9h3" stroke="#0e4a66" stroke-width="1.400"/><path d="M5.500 5.500v7M9 5.500v7" stroke="#0e4a66" stroke-width="2"/></svg>
<div class="a" style="left:80px;top:310px;width:25px;height:18px;background:#0a6fd0;outline:1px dotted #e8b070;outline-offset:-1px"></div>
<div class="tr" style="left:82px;top:310px;color:#fff;letter-spacing:-0.6px;left:81.3px" id="tr8">FC0</div>
<svg style="left:42px;top:329px" width="16" height="16" viewBox="0 0 16 16"><path d="M6.800 4v9" stroke="#111" stroke-width="1.800"/><path d="M3 0l3 2.800-3 2.800-3-2.800z" fill="#0e4a66"/><path d="M7.500 4.500l3.500-2.500M7.500 12.500l3.500 1.500" stroke="#f28c1e" stroke-width="1.300"/><path d="M12.500 -.5l2.500 2.500-2.500 2.500-2.500-2.500zM12.500 11l2.500 2.500-2.500 2.500-2.500-2.500z" fill="#f28c1e"/></svg>
<div class="tr" style="left:63px;top:328px" id="tr9">Custom variable</div>
<svg style="left:42px;top:347px" width="16" height="16" viewBox="0 0 16 16"><path d="M6.800 4v9" stroke="#cfd3d8" stroke-width="1.800"/><path d="M3 0l3 2.800-3 2.800-3-2.800z" fill="#1fe01f"/><path d="M7.500 4.500l3.500-2.500M7.500 12.500l3.500 1.500" stroke="#cfd3d8" stroke-width="1.300"/><path d="M12.500 -.5l2.500 2.500-2.500 2.500-2.500-2.500zM12.500 11l2.500 2.500-2.500 2.500-2.500-2.500z" fill="#1a1ae6"/></svg>
<div class="tr" style="left:63px;top:346px" id="tr10">Custom structure</div>
<svg style="left:27px;top:369px" width="9" height="9" viewBox="0 0 9 9"><rect x=".5" y=".5" width="8" height="8" rx="1" fill="#fff" stroke="#9a9a9a"/><path d="M2 4.500h5M4.500 2v5" stroke="#3a4a9a" stroke-width="1"/></svg>
<svg style="left:42px;top:365px" width="16" height="16" viewBox="0 0 16 16"><circle cx="8" cy="8" r="7.300" fill="#fff" stroke="#0e4a66" stroke-width="1.200"/><path d="M3 5c2-2 4 0 5-2M2 10c2-1 3 1 3 3M9 7c2-1 4 0 5 2M8 11c1 2 3 1 4 3M7 6l2 4" fill="none" stroke="#0e4a66" stroke-width="1"/></svg>
<div class="tr" style="left:63px;top:364px" id="tr11">Global variable</div>
<svg style="left:8px;top:387px" width="9" height="9" viewBox="0 0 9 9"><rect x=".5" y=".5" width="8" height="8" rx="1" fill="#fff" stroke="#9a9a9a"/><path d="M2 4.500h5M4.500 2v5" stroke="#3a4a9a" stroke-width="1"/></svg>
<svg style="left:23px;top:383px" width="16" height="16" viewBox="0 0 16 16"><rect x=".5" y=".5" width="15" height="11" rx="1" fill="#eef2f8" stroke="#a9b6cc"/><path d="M4 13.500l2.500-2h-3z" fill="#a9b6cc"/><path d="M3 4.500h10M3 7.500h10" stroke="#0e4a66" stroke-width="1.400"/></svg>
<div class="tr" style="left:44px;top:382px" id="tr12">Device Comment</div>
<svg style="left:8px;top:405px" width="9" height="9" viewBox="0 0 9 9"><rect x=".5" y=".5" width="8" height="8" rx="1" fill="#fff" stroke="#9a9a9a"/><path d="M2 4.500h5M4.500 2v5" stroke="#3a4a9a" stroke-width="1"/></svg>
<svg style="left:23px;top:401px" width="16" height="16" viewBox="0 0 16 16"><path d="M.5 15.500V.5h5l1.500 2h8.500v13z" fill="#fff" stroke="#0e4a66" stroke-width="1"/><path d="M.5 4.500h15" stroke="#0e4a66"/><circle cx="10.500" cy="10.500" r="2.800" fill="none" stroke="#0e4a66" stroke-width="1.600" stroke-dasharray="1.500 1"/><circle cx="10.500" cy="10.500" r="1" fill="#0e4a66"/></svg>
<div class="tr" style="left:44px;top:400px" id="tr13">Parameter settings</div>
<svg style="left:23px;top:419px" width="16" height="16" viewBox="0 0 16 16"><path d="M0 0h3v6h10V0h3v16H0z" fill="#8fc0c8"/><rect x="0" y="9" width="16" height="7" fill="#7fb4be"/><rect x="7" y="1" width="2" height="3" fill="#f2a01e"/></svg>
<div class="tr" style="left:44px;top:418px" id="tr14">Device memory</div>
<svg style="left:8px;top:441px" width="9" height="9" viewBox="0 0 9 9"><rect x=".5" y=".5" width="8" height="8" rx="1" fill="#fff" stroke="#9a9a9a"/><path d="M2 4.500h5" stroke="#3a4a9a" stroke-width="1"/></svg>
<svg style="left:23px;top:437px" width="16" height="16" viewBox="0 0 16 16"><circle cx="8" cy="8" r="7" fill="#fff" stroke="#0e4a66" stroke-width="1.800"/><path d="M6 4l4 4-4 4" fill="none" stroke="#0e4a66" stroke-width="2"/></svg>
<div class="tr" style="left:44px;top:436px" id="tr15">Extended Function Module</div>
<svg style="left:46px;top:455px" width="16" height="16" viewBox="0 0 16 16"><rect x="1" y="1" width="4" height="15" fill="#7fb4be"/><circle cx="10" cy="5" r="2.800" fill="none" stroke="#0e4a66" stroke-width="1.400" stroke-dasharray="1.300 .9"/><circle cx="10" cy="5" r=".9" fill="#0e4a66"/></svg>
<div class="tr" style="left:63px;top:454px" id="tr16">Extension module</div>
<svg style="left:23px;top:473px" width="16" height="16" viewBox="0 0 16 16"><path d="M0 4.500h10" stroke="#0e4a66" stroke-width="2.400"/><path d="M8 0l7 4.500-7 4.500z" fill="#0e4a66"/><path d="M6 11.500h10" stroke="#111" stroke-width="2.400"/><path d="M8 7l-7 4.500 7 4.500z" fill="#111"/></svg>
<div class="tr" style="left:44px;top:472px;letter-spacing:-0.466px;left:43.65px" id="tr17">EtherCAT</div>
<svg style="left:23px;top:491px" width="16" height="16" viewBox="0 0 16 16"><rect x=".5" y=".5" width="8" height="14" fill="#e9e9e9" stroke="#555"/><path d="M3 2v11M5.500 2v6" stroke="#555" stroke-width="1.200"/><rect x="9.500" y="9.500" width="6" height="6" fill="#d0d0d0" stroke="#777"/><path d="M10 10l5 5M15 10l-5 5" stroke="#777" stroke-width=".8"/></svg>
<div class="tr" style="left:44px;top:490px" id="tr18">Motion control axis</div>
<svg style="left:23px;top:509px" width="16" height="16" viewBox="0 0 16 16"><path d="M0 3l5-2 7 8-5 2z" fill="#2b8f9a"/><path d="M2 2l9 9" stroke="#0e4a66" stroke-width="3"/><path d="M10 9c3 0 5 2 6 5l-4-1z" fill="#5fb4c4"/></svg>
<div class="tr" style="left:44px;top:508px" id="tr19">Electronic CAM table</div>
<div class="a" style="left:148px;top:141px;width:7px;height:697px;background:#293955"></div>
<div class="a" style="left:1px;top:819px;width:146px;height:16px;background:#f0f0f0"></div>
<div class="a" style="left:18px;top:819px;width:66px;height:15px;background:#cdcdcd"></div>
<svg style="left:6px;top:822.500px" width="6" height="8" viewBox="0 0 6 8"><path d="M5 .5l-3.500 3.500 3.500 3.500" fill="none" stroke="#505050" stroke-width="2"/></svg>
<svg style="left:136px;top:822.500px" width="6" height="8" viewBox="0 0 6 8"><path d="M1 .5l3.500 3.500-3.500 3.500" fill="none" stroke="#505050" stroke-width="2"/></svg>
<!-- document tabs -->
<svg style="left:154px;top:143px" width="270" height="18" viewBox="0 0 270 18"><path d="M1 18L19 .5H145V18z" fill="#fff"/><path d="M146 18V4.500L150 .3H261.500a1.500 1.500 0 0 1 1.500 1.500V18z" fill="#cfd6e5"/></svg>
<div class="t" style="left:187px;top:144px;font-weight:bold;color:#111;font-size:12px;letter-spacing:-0.35px;letter-spacing:-0.385px;left:186.25px" id="tab1">Scanning MAIN*</div>
<svg style="left:287px;top:149px" width="8" height="8" viewBox="0 0 8 8"><path d="M.5.5l7 7M7.500.5l-7 7" stroke="#6e6e6e" stroke-width="1.300"/></svg>
<div class="t" style="left:324px;top:144px;color:#111;letter-spacing:0.081px;left:323.25px" id="tab2">Function FC0*</div>
<svg style="left:1426px;top:150px" width="9" height="6" viewBox="0 0 9 6"><path d="M0 0h9l-4.500 5.500z" fill="#fff"/></svg>
<!-- doc body -->
<div class="a" style="left:154px;top:161px;width:1286px;height:617px;background:#cfd6e5"></div>
<!-- toolbar icons -->
<svg style="left:165px;top:164px" width="18" height="18" viewBox="0 0 18 18"><path d="M4 11.500l8-6 4.500 2.500v4l-7.500 5-5-2.500z" fill="#c4c6cb"/><path d="M4 11.500l5 2.500 7.500-5.500" fill="none" stroke="#b0b2b8"/><path d="M9 14v3" stroke="#b0b2b8"/><path d="M6 1v10M1.500 3.500l9 5M10.500 3.500l-9 5" stroke="#e4e5e9" stroke-width="1.500"/></svg>
<div class="a" style="left:189px;top:162px;width:1px;height:21px;background:#bcc3d4"></div>
<svg style="left:198px;top:166px" width="12" height="14" viewBox="0 0 12 14"><path d="M6 0L12 7H9V14H3V7H0z" fill="#a3a3a3"/></svg>
<svg style="left:220px;top:166px" width="12" height="14" viewBox="0 0 12 14"><path d="M6 14L12 7H9V0H3V7H0z" fill="#a3a3a3"/></svg>
<div class="a" style="left:241px;top:162px;width:1px;height:21px;background:#bcc3d4"></div>
<svg style="left:250px;top:167px" width="11" height="12.500" viewBox="0 0 11 12.500"><path d="M.5.5l10 11.500M10.500.5l-10 11.500" stroke="#a3a3a3" stroke-width="1.500"/></svg>
<!-- grid -->
<div class="a" style="left:155px;top:187px;width:1284px;height:67px;background:#fff;border:1px solid #b9bfcc"></div>
<div class="a" style="left:156px;top:188px;width:1282px;height:24px;background:#f0f0f0;border-top:1px solid #8594ad;border-bottom:1px solid #8594ad"></div>
<div class="a" style="left:156px;top:188px;width:30px;height:45px;background:#f0f0f0;border:1px solid #8594ad"></div>
<div class="a" style="left:157px;top:211px;width:28px;height:1px;background:#8594ad"></div>
<svg style="left:167px;top:193px" width="14" height="14" viewBox="0 0 14 14"><path d="M14 0v14H0z" fill="#c6c9d0"/></svg>
<div class="t" style="left:166px;top:214px;color:#111;font-size:12px" id="g1">1</div>
<div class="a" style="left:385px;top:193px;width:1px;height:15px;background:#c6c9d0"></div><div class="a" style="left:585px;top:193px;width:1px;height:15px;background:#c6c9d0"></div><div class="a" style="left:785px;top:193px;width:1px;height:15px;background:#c6c9d0"></div><div class="a" style="left:985px;top:193px;width:1px;height:15px;background:#c6c9d0"></div>
<div class="a" style="left:386px;top:211px;width:1px;height:21px;background:#ececec"></div><div class="a" style="left:586px;top:211px;width:1px;height:21px;background:#ececec"></div><div class="a" style="left:786px;top:211px;width:1px;height:21px;background:#ececec"></div><div class="a" style="left:986px;top:211px;width:1px;height:21px;background:#ececec"></div>
<div class="a" style="left:186px;top:232px;width:1252px;height:1px;background:#ececec"></div>
<div class="t" style="left:191px;top:192px;color:#111;letter-spacing:0.098px;left:190.3px" id="h1">Category</div>
<div class="t" style="left:391px;top:192px;color:#111;letter-spacing:0.157px;left:390.45px" id="h2">Name</div>
<div class="t" style="left:591px;top:192px;color:#111;letter-spacing:0.286px;left:588.8px" id="h3">Type of data</div>
<div class="t" style="left:791px;top:192px;color:#111;letter-spacing:0.322px;left:790.0px" id="h4">Initial value</div>
<div class="t" style="left:991px;top:192px;color:#111;letter-spacing:0.266px;left:990.5px" id="h5">Comment</div>
<!-- hscroll 1 -->
<div class="a" style="left:156px;top:254px;width:1282px;height:17px;background:#d6dbe9"></div>
<div class="a" style="left:173px;top:258px;width:1088px;height:9px;background:#bbc0cc"></div>
<svg style="left:162px;top:258px" width="5" height="9" viewBox="0 0 5 9"><path d="M5 0v9L0 4.500z" fill="#6d6d6d"/></svg>
<svg style="left:1427px;top:258px" width="5" height="9" viewBox="0 0 5 9"><path d="M0 0v9l5-4.500z" fill="#6d6d6d"/></svg>
<div class="a" style="left:154px;top:272px;width:1286px;height:1px;background:#c3c9d8"></div><div class="a" style="left:154px;top:276px;width:1286px;height:1px;background:#c3c9d8"></div>
<!-- ladder editor -->
<div class="a" style="left:156px;top:278px;width:1282px;height:499px;background:#fff;border:1px solid #8a8a8a"></div>
<div class="a" style="left:178px;top:279px;width:1259px;height:16px;background:#e8ecf6"></div>
<div class="a" style="left:177px;top:279px;width:1px;height:221px;background:#111"></div>
<svg style="left:162px;top:284px" width="10" height="6.500" viewBox="0 0 10 7"><path d="M0 0h10l-5 6.500z" fill="#111"/></svg>
<div class="t" style="left:182px;top:279px;color:#111;font-size:11px" id="l1">1</div>
<div class="t" style="left:218px;top:279px;color:#8c8c8c;font-style:italic;letter-spacing:0.242px;left:218.45px" id="l2">Insert label</div>
<div class="t" style="left:298px;top:279px;color:#8c8c8c;font-style:italic;letter-spacing:0.223px;left:298.15px" id="l3">Insert a declaration line</div>
<div class="a" style="left:159px;top:295px;width:7px;height:203px;background:#6fb2f0"></div>
<div class="a" style="left:168px;top:295px;width:7px;height:203px;background:#c6c2f6"></div>
<div class="a" style="left:177px;top:295px;width:182px;height:205px;background:#bdf4fc;border:1px solid #111"></div>
<div class="a" style="left:157px;top:501px;width:1280px;height:1px;background:#c8c8c8"></div>
<!-- function block inside -->
<div class="a" style="left:236px;top:344px;width:100px;height:114px;border:1px solid #111"></div>
<div class="t" style="left:271px;top:344px;color:#111;letter-spacing:-0.613px;left:271.25px" id="b1">ENO</div>
<div class="t" style="left:240px;top:344px;color:#111">EN</div>
<div class="t" style="left:259px;top:360px;color:#111;font-weight:bold;font-size:11px;transform:scaleX(0.8);transform-origin:0 0;letter-spacing:0px;left:260.0px" id="b2">???</div>
<div class="t" style="left:269px;top:393px;color:#111;letter-spacing:0.4px;left:268.6px" id="b3">Out2</div>
<div class="t" style="left:250px;top:393px;color:#111">2</div>
<div class="t" style="left:250px;top:425px;color:#111">3</div>
<!-- hscroll 2 -->
<div class="a" style="left:156px;top:759px;width:1281px;height:17px;background:#d6dbe9"></div>
<div class="a" style="left:173px;top:763px;width:1001px;height:8px;background:#bbc0cc"></div>
<svg style="left:162px;top:763px" width="5" height="9" viewBox="0 0 5 9"><path d="M5 0v9L0 4.500z" fill="#6d6d6d"/></svg>
<svg style="left:1427px;top:763px" width="5" height="9" viewBox="0 0 5 9"><path d="M0 0v9l5-4.500z" fill="#6d6d6d"/></svg>
<!-- bottom info panel -->
<div class="a" style="left:154px;top:784px;width:1286px;height:22px;background:#4d6082"></div>
<div class="t" style="left:158px;top:787px;color:#fff;font-size:12px;letter-spacing:-0.1px;letter-spacing:0.188px;left:157.25px" id="io">Information Output</div>
<svg style="left:1387px;top:794px" width="9" height="5.500" viewBox="0 0 9 6"><path d="M0 0h9l-4.500 5.500z" fill="#fff"/></svg>
<svg style="left:1407px;top:790.500px" width="7" height="10" viewBox="0 0 7 10"><path d="M1.500 0h4v5.500h-4zM0 5.500h7M3.500 5.500v4.500" fill="none" stroke="#fff" stroke-width="1.200"/><path d="M4.500 0v5.500" stroke="#fff" stroke-width="1.600"/></svg>
<svg style="left:1426px;top:792px" width="7.500" height="7.500" viewBox="0 0 8 8"><path d="M.5.500l7 7M7.500.5l-7 7" stroke="#fff" stroke-width="1.600"/></svg>
<div class="a" style="left:154px;top:806px;width:1286px;height:7px;background:#fff"></div>
<div class="a" style="left:193px;top:806px;width:1px;height:7px;background:#e4e4e4"></div>
<div class="a" style="left:273px;top:806px;width:1px;height:7px;background:#e4e4e4"></div>
<div class="a" style="left:353px;top:806px;width:1px;height:7px;background:#e4e4e4"></div>
<div class="a" style="left:433px;top:806px;width:1px;height:7px;background:#e4e4e4"></div>
<div class="a" style="left:783px;top:806px;width:1px;height:7px;background:#e4e4e4"></div>
<div class="a" style="left:863px;top:806px;width:1px;height:7px;background:#e4e4e4"></div>
<div class="a" style="left:943px;top:806px;width:1px;height:7px;background:#e4e4e4"></div>
<div class="a" style="left:154px;top:813px;width:1286px;height:23px;background:#4d6082"></div>
<div class="a" style="left:154px;top:813px;width:130px;height:23px;background:#fff"></div>
<svg style="left:160px;top:815px" width="12" height="15" viewBox="0 0 12 15"><rect x=".5" y=".5" width="11" height="14" fill="#fff" stroke="#0e4a66"/><rect x="0" y="0" width="12" height="3" fill="#0e4a66"/><path d="M2.500 6h7M2.500 8.500h7M2.500 11h7" stroke="#5f7f8f" stroke-width="1.200"/></svg>
<div class="t" style="left:176px;top:816px;color:#1f4e9e;letter-spacing:0.438px;left:175.25px" id="bt1">Information Output</div>
<svg style="left:292px;top:815px" width="12" height="15" viewBox="0 0 12 15"><rect x=".5" y=".5" width="11" height="14" fill="#fff" stroke="#0e4a66"/><rect x="0" y="0" width="12" height="3" fill="#0e4a66"/><path d="M2.500 6h7M2.500 8.500h7M2.500 11h7" stroke="#5f7f8f" stroke-width="1.200"/></svg>
<div class="t" style="left:307px;top:816px;color:#fff;letter-spacing:-0.288px;left:307.0px" id="bt2">Search / Replace</div>
<svg style="left:405px;top:815px" width="12" height="15" viewBox="0 0 12 15"><rect x=".5" y=".5" width="11" height="14" fill="#fff" stroke="#0e4a66"/><rect x="0" y="0" width="12" height="3" fill="#0e4a66"/><path d="M2.500 6h7M2.500 8.500h7M2.500 11h7" stroke="#5f7f8f" stroke-width="1.200"/></svg>
<div class="t" style="left:420px;top:816px;color:#fff;letter-spacing:-0.278px;left:419.75px" id="bt3">PLC Verify result</div>
<svg style="left:516px;top:815px" width="12" height="15" viewBox="0 0 12 15"><rect x=".5" y=".5" width="11" height="14" fill="#fff" stroke="#0e4a66"/><rect x="0" y="0" width="12" height="3" fill="#0e4a66"/><path d="M2.500 6h7M2.500 8.500h7M2.500 11h7" stroke="#5f7f8f" stroke-width="1.200"/></svg>
<div class="t" style="left:531px;top:816px;color:#fff;letter-spacing:-0.108px;left:530.75px" id="bt4">Device usage list</div>
<svg style="left:630px;top:815px" width="12" height="15" viewBox="0 0 12 15"><rect x=".5" y=".5" width="11" height="14" fill="#fff" stroke="#0e4a66"/><rect x="0" y="0" width="12" height="3" fill="#0e4a66"/><path d="M2.500 6h7M2.500 8.500h7M2.500 11h7" stroke="#5f7f8f" stroke-width="1.200"/></svg>
<div class="t" style="left:645px;top:816px;color:#fff;letter-spacing:-0.288px;left:644.75px" id="bt5">Progress</div>
<!-- status bar -->
<div class="a" style="left:0;top:836px;width:1440px;height:25px;background:#007acc"></div>
<div class="a" style="left:0;top:860px;width:1440px;height:1px;background:#1c3a5e"></div>
<div class="a" style="left:156px;top:838px;width:70px;height:20px;background:#005f9e"></div>
<div class="t" style="left:9px;top:840px;color:#fff;letter-spacing:0.155px;left:8.75px" id="s1">English</div>
<div class="t" style="left:91px;top:840px;color:#fff;transform:scaleX(0.84);transform-origin:0 0;letter-spacing:0px;left:91.1px" id="s2">CAP</div>
<div class="t" style="left:165px;top:840px;color:#fff;letter-spacing:0.136px;left:164.75px" id="s3">Number</div>
<div class="t" style="left:239px;top:840px;color:#fff;letter-spacing:0.027px;left:238.75px" id="s4">Rewrite</div>
<div class="t" style="left:411px;top:840px;color:#fff;transform:scaleX(0.86);transform-origin:0 0;letter-spacing:0px;left:410.8px" id="s5">LX6V</div>
<!-- context menu -->
<div class="a" style="left:93.500px;top:322.500px;width:158px;height:114.500px;background:#f1f1f1;box-shadow:2px 2px 4px rgba(0,0,0,.45);border:1px solid #e2e2e2"></div>
<div class="a" style="left:95px;top:324px;width:29px;height:112px;background:#f5f5f5"></div>
<div class="t" style="left:128px;top:327px;height:18px;line-height:18px;font-size:13px;letter-spacing:-0.2px;color:#111;letter-spacing:0.04px;left:127.5px" id="m1">Delete</div>
<div class="t" style="left:128px;top:349px;height:18px;line-height:18px;font-size:13px;letter-spacing:-0.2px;color:#111;letter-spacing:-0.331px;left:127.5px" id="m2">Rename</div>
<div class="t" style="left:128px;top:371px;height:18px;line-height:18px;font-size:13px;letter-spacing:-0.2px;color:#111;letter-spacing:-0.7px;left:128.0px" id="m3">Set</div>
<div class="t" style="left:128px;top:393px;height:18px;line-height:18px;font-size:13px;letter-spacing:-0.2px;color:#8e8e8e;letter-spacing:0.428px;left:127.5px" id="m4">Move up</div>
<div class="t" style="left:128px;top:415px;height:18px;line-height:18px;font-size:13px;letter-spacing:-0.2px;color:#8e8e8e;letter-spacing:0.406px;left:127.5px" id="m5">Move down</div>
<!-- configuration dialog -->
<div class="a" style="left:297px;top:325px;width:282px;height:377px;background:#e7eaf4;border:1px solid #1f6ab8"></div>
<div class="a" style="left:298px;top:326px;width:280px;height:30px;background:#d6dbe9"></div>
<div class="t" style="left:309px;top:336px;font-size:12px;letter-spacing:-0.3px;letter-spacing:-0.117px;left:309.3px" id="c0">Configuration-FC0</div>
<svg style="left:556px;top:332px" width="8" height="8" viewBox="0 0 8 8"><path d="M.5.5l7 7M7.500.5l-7 7" stroke="#444" stroke-width="1.200"/></svg>
<div class="t mono" style="left:328px;top:365.5px">Program name</div>
<div class="a" style="left:328px;top:385px;width:219px;height:23px;background:#e7eaf4;border:1px solid #7a7a7a;box-shadow:inset 0 0 0 1px #fbfbfd;color:#6d6d6d;font-size:12px;letter-spacing:-0.9px;line-height:20px;padding-left:2px;white-space:nowrap">FC0</div>
<div class="t mono" style="left:328px;top:415.5px">program</div>
<div class="a" style="left:328px;top:434px;width:219px;height:21px;background:#e7eaf4;border:1px solid #7a7a7a;box-shadow:inset 0 0 0 1px #fbfbfd;color:#6d6d6d;font-size:12px;letter-spacing:-0.5px;line-height:18px;padding-left:2px;white-space:nowrap">Ladder</div>
<div class="a" style="left:527px;top:436px;width:1px;height:17px;background:#f8f9fc"></div>
<svg style="left:533px;top:443px" width="6" height="4" viewBox="0 0 6 4"><path d="M0 0h6l-3 3.500z" fill="#555"/></svg>
<div class="t mono" style="left:328px;top:459.5px">Creator</div>
<div class="a" style="left:328px;top:480px;width:219px;height:23px;background:#e7eaf4;border:1px solid #7a7a7a;box-shadow:inset 0 0 0 1px #fbfbfd;color:#6d6d6d;font-size:12px;letter-spacing:-0.4px;line-height:20px;padding-left:2px;white-space:nowrap"></div>
<div class="t mono" style="left:328px;top:508.5px">Creation date</div>
<div class="a" style="left:328px;top:528px;width:219px;height:23px;background:#e7eaf4;border:1px solid #7a7a7a;box-shadow:inset 0 0 0 1px #fbfbfd;color:#6d6d6d;font-size:12px;letter-spacing:-0.35px;line-height:20px;padding-left:2px;white-space:nowrap">2023/01/30 10:37:31</div>
<div class="t mono" style="left:328px;top:557.5px">Remarks</div>
<div class="a" style="left:328px;top:577px;width:219px;height:23px;background:#fdfdfd;border:1px solid #c6c9d4;box-shadow:inset 0 0 0 1px #fbfbfd;color:#6d6d6d;font-size:12px;letter-spacing:-0.4px;line-height:20px;padding-left:2px;white-space:nowrap"></div>
<div class="t mono" style="left:328px;top:605.5px">Function return value</div>
<div class="a" style="left:328px;top:626px;width:117px;height:23px;background:#e7eaf4;border:1px solid #7a7a7a;box-shadow:inset 0 0 0 1px #fbfbfd;color:#6d6d6d;font-size:12px;letter-spacing:-1.3px;line-height:20px;padding-left:2px;white-space:nowrap">BOOL</div>
<div class="a mono" style="left:450px;top:627px;width:46px;height:22px;background:#d6dbe9;border:1px solid #a3a8b8;text-align:center;line-height:21px;color:#111">...</div>
<div class="a mono" style="left:500px;top:626px;width:47px;height:23px;background:#d6dbe9;border:1px solid #a3a8b8;text-align:center;line-height:22px;color:#111">None</div>
<div class="a mono" style="left:403px;top:660px;width:75px;height:23px;background:#fff4c2;border:1px solid #1f6fc4;text-align:center;line-height:22px;color:#111">OK</div>
<div class="a mono" style="left:482px;top:660px;width:75px;height:23px;background:#d6dbe9;border:1px solid #a3a8b8;text-align:center;line-height:22px;color:#111">Cancel</div>
<!-- input helper dialog -->
<div class="a" style="left:641px;top:309px;width:682px;height:429px;background:#e7eaf4;border:1px solid #1a7ad4"></div>
<div class="a" style="left:642px;top:310px;width:680px;height:30px;background:#0078d7"></div>
<div class="t" style="left:650px;top:317px;color:#fff;font-size:13px;letter-spacing:0;letter-spacing:0.252px;left:649.0px" id="ih">Input helper</div>
<svg style="left:1302px;top:319px" width="10" height="10" viewBox="0 0 10 10"><path d="M.5.5l9 9M9.500.5l-9 9" stroke="#fff" stroke-width="1.100"/></svg>
<div class="a" style="left:662px;top:360px;width:188px;height:330px;background:#fff;border:1px solid #b9bfcc"></div>
<div class="a" style="left:664px;top:362px;width:184px;height:13px;background:#0a74d6;outline:1px dotted #e0b080;outline-offset:-1px"></div>
<div class="t" style="left:665px;top:362px;height:15px;line-height:15px;color:#fff;font-size:12px;letter-spacing:-0.45px;letter-spacing:-0.35px;left:664.6px" id="st">Standard type</div>
<div class="a" style="left:857px;top:364px;width:438px;height:325px;background:#fff;border:1px solid #b9bfcc;border-top-color:#9aa3b5"></div>
<div class="a" style="left:858px;top:366px;width:418px;height:20px;background:#f0f0f0;border-top:1px solid #8594ad;border-bottom:1px solid #6f7f99"></div>
<div class="a" style="left:1074px;top:370px;width:1px;height:12px;background:#b5b9c4"></div><div class="a" style="left:1274px;top:370px;width:1px;height:12px;background:#b5b9c4"></div>
<div class="t mono" style="left:880px;top:369.500px">Name</div>
<div class="a" style="left:1277px;top:366px;width:16px;height:322px;background:#f0f0f0"></div>
<div class="a" style="left:1277px;top:383px;width:15px;height:283px;background:#cdcdcd"></div>
<svg style="left:1281px;top:372px" width="8" height="5" viewBox="0 0 8 5"><path d="M.5 4.500l3.500-3.500 3.500 3.500" fill="none" stroke="#333" stroke-width="1.600"/></svg>
<svg style="left:1281px;top:676px" width="8" height="5" viewBox="0 0 8 5"><path d="M.5.5l3.500 3.500 3.500-3.500" fill="none" stroke="#333" stroke-width="1.600"/></svg>
<div class="a" style="left:858px;top:386px;width:418px;height:302px;overflow:hidden">
<svg style="left:24px;top:4px" width="8" height="8" viewBox="0 0 8 8"><path d="M4 .8L7.200 4 4 7.200.8 4z" fill="#eaf9fd" stroke="#1fb8dc" stroke-width="1.500"/></svg><div class="t mono" style="left:38.200px;top:1.5px">BOOL</div>
<svg style="left:24px;top:20px" width="8" height="8" viewBox="0 0 8 8"><path d="M4 .8L7.200 4 4 7.200.8 4z" fill="#eaf9fd" stroke="#1fb8dc" stroke-width="1.500"/></svg><div class="t mono" style="left:38.200px;top:17.5px">BYTE</div>
<svg style="left:24px;top:36px" width="8" height="8" viewBox="0 0 8 8"><path d="M4 .8L7.200 4 4 7.200.8 4z" fill="#eaf9fd" stroke="#1fb8dc" stroke-width="1.500"/></svg><div class="t mono" style="left:38.200px;top:33.5px">WORD</div>
<svg style="left:24px;top:52px" width="8" height="8" viewBox="0 0 8 8"><path d="M4 .8L7.200 4 4 7.200.8 4z" fill="#eaf9fd" stroke="#1fb8dc" stroke-width="1.500"/></svg><div class="t mono" style="left:38.200px;top:49.5px">DWORD</div>
<svg style="left:24px;top:68px" width="8" height="8" viewBox="0 0 8 8"><path d="M4 .8L7.200 4 4 7.200.8 4z" fill="#eaf9fd" stroke="#1fb8dc" stroke-width="1.500"/></svg><div class="t mono" style="left:38.200px;top:65.5px">LWORD</div>
<svg style="left:24px;top:84px" width="8" height="8" viewBox="0 0 8 8"><path d="M4 .8L7.200 4 4 7.200.8 4z" fill="#eaf9fd" stroke="#1fb8dc" stroke-width="1.500"/></svg><div class="t mono" style="left:38.200px;top:81.5px">SINT</div>
<svg style="left:24px;top:100px" width="8" height="8" viewBox="0 0 8 8"><path d="M4 .8L7.200 4 4 7.200.8 4z" fill="#eaf9fd" stroke="#1fb8dc" stroke-width="1.500"/></svg><div class="t mono" style="left:38.200px;top:97.5px">USINT</div>
<svg style="left:24px;top:116px" width="8" height="8" viewBox="0 0 8 8"><path d="M4 .8L7.200 4 4 7.200.8 4z" fill="#eaf9fd" stroke="#1fb8dc" stroke-width="1.500"/></svg><div class="t mono" style="left:38.200px;top:113.5px">INT</div>
<svg style="left:24px;top:132px" width="8" height="8" viewBox="0 0 8 8"><path d="M4 .8L7.200 4 4 7.200.8 4z" fill="#eaf9fd" stroke="#1fb8dc" stroke-width="1.500"/></svg><div class="t mono" style="left:38.200px;top:129.5px">UINT</div>
<svg style="left:24px;top:148px" width="8" height="8" viewBox="0 0 8 8"><path d="M4 .8L7.200 4 4 7.200.8 4z" fill="#eaf9fd" stroke="#1fb8dc" stroke-width="1.500"/></svg><div class="t mono" style="left:38.200px;top:145.5px">DINT</div>
<svg style="left:24px;top:164px" width="8" height="8" viewBox="0 0 8 8"><path d="M4 .8L7.200 4 4 7.200.8 4z" fill="#eaf9fd" stroke="#1fb8dc" stroke-width="1.500"/></svg><div class="t mono" style="left:38.200px;top:161.5px">UDINT</div>
<svg style="left:24px;top:180px" width="8" height="8" viewBox="0 0 8 8"><path d="M4 .8L7.200 4 4 7.200.8 4z" fill="#eaf9fd" stroke="#1fb8dc" stroke-width="1.500"/></svg><div class="t mono" style="left:38.200px;top:177.5px">LINT</div>
<svg style="left:24px;top:196px" width="8" height="8" viewBox="0 0 8 8"><path d="M4 .8L7.200 4 4 7.200.8 4z" fill="#eaf9fd" stroke="#1fb8dc" stroke-width="1.500"/></svg><div class="t mono" style="left:38.200px;top:193.5px">REAL</div>
<svg style="left:24px;top:212px" width="8" height="8" viewBox="0 0 8 8"><path d="M4 .8L7.200 4 4 7.200.8 4z" fill="#eaf9fd" stroke="#1fb8dc" stroke-width="1.500"/></svg><div class="t mono" style="left:38.200px;top:209.5px">LREAL</div>
<svg style="left:24px;top:228px" width="8" height="8" viewBox="0 0 8 8"><path d="M4 .8L7.200 4 4 7.200.8 4z" fill="#eaf9fd" stroke="#1fb8dc" stroke-width="1.500"/></svg><div class="t mono" style="left:38.200px;top:225.5px">TIME</div>
<svg style="left:24px;top:244px" width="8" height="8" viewBox="0 0 8 8"><path d="M4 .8L7.200 4 4 7.200.8 4z" fill="#eaf9fd" stroke="#1fb8dc" stroke-width="1.500"/></svg><div class="t mono" style="left:38.200px;top:241.5px">TIME_OF_DAY</div>
<svg style="left:24px;top:260px" width="8" height="8" viewBox="0 0 8 8"><path d="M4 .8L7.200 4 4 7.200.8 4z" fill="#eaf9fd" stroke="#1fb8dc" stroke-width="1.500"/></svg><div class="t mono" style="left:38.200px;top:257.5px">DATE</div>
<svg style="left:24px;top:276px" width="8" height="8" viewBox="0 0 8 8"><path d="M4 .8L7.200 4 4 7.200.8 4z" fill="#eaf9fd" stroke="#1fb8dc" stroke-width="1.500"/></svg><div class="t mono" style="left:38.200px;top:273.5px">DATE_AND_TIME</div>
<svg style="left:24px;top:292px" width="8" height="8" viewBox="0 0 8 8"><path d="M4 .8L7.200 4 4 7.200.8 4z" fill="#eaf9fd" stroke="#1fb8dc" stroke-width="1.500"/></svg><div class="t mono" style="left:38.200px;top:289.5px">LTIME</div>
</div>
<div class="a mono" style="left:1137px;top:702px;width:75px;height:23px;background:#d6dbe9;border:1px solid #a3a8b8;text-align:center;line-height:22px;color:#8a8a8a">OK</div>
<div class="a mono" style="left:1224px;top:702px;width:75px;height:23px;background:#d6dbe9;border:1px solid #a3a8b8;text-align:center;line-height:22px;color:#111">Cancel</div>
<svg style="left:1311px;top:726px" width="9" height="9" viewBox="0 0 9 9"><g fill="#a9adb9"><rect x="6" y="0" width="2" height="2"/><rect x="3" y="3" width="2" height="2"/><rect x="6" y="3" width="2" height="2"/><rect x="0" y="6" width="2" height="2"/><rect x="3" y="6" width="2" height="2"/><rect x="6" y="6" width="2" height="2"/></g></svg>
<!-- teal annotations -->
<svg style="left:0;top:0;pointer-events:none" width="1440" height="861" viewBox="0 0 1440 861"><g fill="none" stroke="#14999a" stroke-width="3.500"><rect x="103.750" y="369.250" width="79" height="20.100" rx="5"/><rect x="447.800" y="627.200" width="49.600" height="25.100" rx="4.500"/><path d="M184 390L278 465"/><path d="M497.200 626.600L618 579.100"/></g><g fill="#14999a"><path d="M296.300 478.500L281.300 458.300L273 470.800z"/><path d="M638.400 570.700L614.100 572.300L620.500 586.400z"/></g></svg>
</body></html>
